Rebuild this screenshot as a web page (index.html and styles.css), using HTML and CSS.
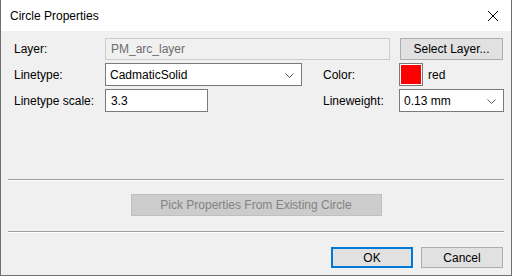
FILE: index.html
```html
<!DOCTYPE html>
<html lang="en">
<head>
  <meta charset="UTF-8">
  <title>Circle Properties</title>
  <link rel="stylesheet" href="styles.css">
</head>
<body>
  <div class="dialog">
    <!-- Title bar -->
    <div class="titlebar">
      <span class="title">Circle Properties</span>
      <svg class="close" width="12" height="12" viewBox="0 0 12 12">
        <path d="M1 1 L11 11 M11 1 L1 11" stroke="#000" stroke-width="1" fill="none"/>
      </svg>
    </div>

    <div class="content">
      <div class="row">
        <label class="lbl">Layer:</label>
        <div class="field disabled layer-field">PM_arc_layer</div>
        <button class="btn select-btn">Select Layer...</button>
      </div>

      <div class="row">
        <label class="lbl">Linetype:</label>
        <div class="field combo linetype-combo">
          <span>CadmaticSolid</span>
          <svg class="chev" width="9" height="5" viewBox="0 0 9 5"><path d="M0.5 0.5 L4.5 4.5 L8.5 0.5" stroke="#555" fill="none"/></svg>
        </div>
        <label class="lbl lbl-right">Color:</label>
        <div class="swatch"><div class="swatch-fill"></div></div>
        <span class="color-name">red</span>
      </div>

      <div class="row">
        <label class="lbl">Linetype scale:</label>
        <div class="field scale-field">3.3</div>
        <label class="lbl lbl-right lbl-far">Lineweight:</label>
        <div class="field combo weight-combo">
          <span>0.13 mm</span>
          <svg class="chev" width="9" height="5" viewBox="0 0 9 5"><path d="M0.5 0.5 L4.5 4.5 L8.5 0.5" stroke="#555" fill="none"/></svg>
        </div>
      </div>

      <div class="spacer"></div>
      <hr class="sep">

      <div class="pick-row">
        <button class="btn pick-btn" disabled>Pick Properties From Existing Circle</button>
      </div>

      <hr class="sep">

      <div class="footer">
        <button class="btn ok-btn">OK</button>
        <button class="btn">Cancel</button>
      </div>
    </div>
  </div>
</body>
</html>
```

FILE: styles.css
```css
* {
  box-sizing: border-box;
  margin: 0;
  padding: 0;
}

body {
  font-family: 'Liberation Sans', Arial, sans-serif;
  font-size: 12px;
  color: #000;
  background: #fff;
}

.dialog {
  width: 512px;
  height: 276px;
  border: 1px solid #6f6f6f;
  border-top: none;
  background: #f0f0f0;
  display: flex;
  flex-direction: column;
}

/* Title bar */
.titlebar {
  height: 31px;
  background: #fff;
  display: flex;
  align-items: center;
  justify-content: space-between;
  padding: 0 12px 0 9px;
  flex-shrink: 0;
}

.title {
  font-size: 12px;
}

.close {
  margin-top: 1px;
}

.content {
  flex: 1;
  display: flex;
  flex-direction: column;
  padding: 6px 7px 7px 13px;
}

.row {
  display: flex;
  align-items: center;
  height: 23px;
  margin-bottom: 3px;
}

.lbl {
  width: 91px;
  flex-shrink: 0;
}

.lbl-right {
  width: 76px;
  margin-left: 21px;
}

.lbl-far {
  margin-left: 115px;
}

.field {
  height: 23px;
  border: 1px solid #7a7a7a;
  background: #fff;
  padding: 0 5px;
  display: flex;
  align-items: center;
}

.disabled {
  background: #f0f0f0;
  border-color: #cccccc;
  color: #6d6d6d;
}

.layer-field {
  width: 285px;
  height: 22px;
}

.combo {
  justify-content: space-between;
  padding-right: 7px;
  padding-left: 4px;
}

.linetype-combo {
  width: 197px;
}

.scale-field {
  width: 103px;
}

.weight-combo {
  width: 105px;
}

.chev {
  margin-top: 1px;
}

.swatch {
  width: 24px;
  height: 23px;
  border: 1px solid #7a7a7a;
  padding: 1px;
  background: #fff;
}

.swatch-fill {
  width: 100%;
  height: 100%;
  background: #ff0000;
}

.color-name {
  margin-left: 5px;
}

.btn {
  font-family: inherit;
  font-size: 12px;
  color: #000;
  background: #e1e1e1;
  border: 1px solid #adadad;
  height: 21px;
  width: 82px;
}

.select-btn {
  width: 103px;
  margin-left: 10px;
  height: 22px;
}

.spacer {
  flex: 1;
}

.sep {
  border: none;
  border-top: 1px solid #a0a0a0;
  border-bottom: 1px solid #fff;
  margin: 0 0 0 -6px;
}

.pick-row {
  display: flex;
  justify-content: center;
  padding: 13px 0 15px 0;
}

.pick-btn {
  width: 251px;
  height: 22px;
  background: #cccccc;
  border-color: #bfbfbf;
  color: #838383;
  margin-right: 6px;
}

.footer {
  display: flex;
  justify-content: flex-end;
  gap: 8px;
  padding-top: 14px;
  margin-right: 1px;
}

.ok-btn {
  border: 2px solid #0078d7;
}
```
